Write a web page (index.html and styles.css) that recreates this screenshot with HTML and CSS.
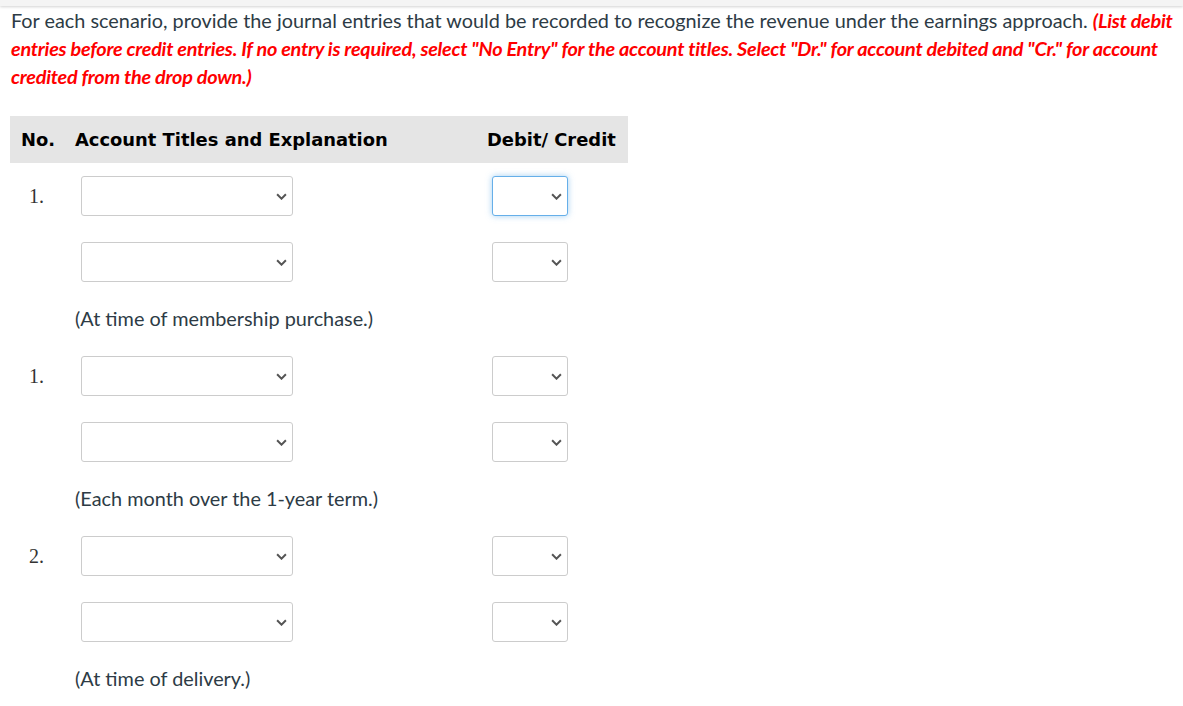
FILE: index.html
```html
<!DOCTYPE html>
<html lang="en">
<head>
  <meta charset="UTF-8">
  <title>Journal Entries</title>
  <link rel="stylesheet" href="styles.css">
</head>
<body>
  <div class="topbar"></div>

  <p class="prompt">
    For each scenario, provide the journal entries that would be recorded to recognize the revenue under the earnings approach.
    <em class="note">(List debit entries before credit entries. If no entry is required, select "No Entry" for the account titles. Select "Dr." for account debited and "Cr." for account credited from the drop down.)</em>
  </p>

  <div class="journal">
    <div class="head">
      <div class="cell">No.</div>
      <div class="cell">Account Titles and Explanation</div>
      <div class="cell">Debit/ Credit</div>
    </div>

    <!-- scenario 1 -->
    <div class="entry">
      <div class="num">1.</div>
      <div class="pick wide"><select class="box"><option></option></select><svg class="chev" viewBox="0 0 10 6"><path d="M1 1l4 4 4-4"/></svg></div>
      <div class="pick narrow"><select class="box focus"><option></option></select><svg class="chev" viewBox="0 0 10 6"><path d="M1 1l4 4 4-4"/></svg></div>
    </div>
    <div class="entry">
      <div class="num"></div>
      <div class="pick wide"><select class="box"><option></option></select><svg class="chev" viewBox="0 0 10 6"><path d="M1 1l4 4 4-4"/></svg></div>
      <div class="pick narrow"><select class="box"><option></option></select><svg class="chev" viewBox="0 0 10 6"><path d="M1 1l4 4 4-4"/></svg></div>
    </div>
    <div class="explain">(At time of membership purchase.)</div>

    <!-- scenario 1, monthly -->
    <div class="entry">
      <div class="num">1.</div>
      <div class="pick wide"><select class="box"><option></option></select><svg class="chev" viewBox="0 0 10 6"><path d="M1 1l4 4 4-4"/></svg></div>
      <div class="pick narrow"><select class="box"><option></option></select><svg class="chev" viewBox="0 0 10 6"><path d="M1 1l4 4 4-4"/></svg></div>
    </div>
    <div class="entry">
      <div class="num"></div>
      <div class="pick wide"><select class="box"><option></option></select><svg class="chev" viewBox="0 0 10 6"><path d="M1 1l4 4 4-4"/></svg></div>
      <div class="pick narrow"><select class="box"><option></option></select><svg class="chev" viewBox="0 0 10 6"><path d="M1 1l4 4 4-4"/></svg></div>
    </div>
    <div class="explain">(Each month over the 1-year term.)</div>

    <!-- scenario 2 -->
    <div class="entry">
      <div class="num">2.</div>
      <div class="pick wide"><select class="box"><option></option></select><svg class="chev" viewBox="0 0 10 6"><path d="M1 1l4 4 4-4"/></svg></div>
      <div class="pick narrow"><select class="box"><option></option></select><svg class="chev" viewBox="0 0 10 6"><path d="M1 1l4 4 4-4"/></svg></div>
    </div>
    <div class="entry">
      <div class="num"></div>
      <div class="pick wide"><select class="box"><option></option></select><svg class="chev" viewBox="0 0 10 6"><path d="M1 1l4 4 4-4"/></svg></div>
      <div class="pick narrow"><select class="box"><option></option></select><svg class="chev" viewBox="0 0 10 6"><path d="M1 1l4 4 4-4"/></svg></div>
    </div>
    <div class="explain">(At time of delivery.)</div>
  </div>
</body>
</html>
```

FILE: styles.css
```css
body {
  margin: 0;
  font-family: 'Lato', sans-serif;
  color: #2d3b45;
  background: #fff;
}
.topbar {
  height: 6px;
  background: #f4f4f4;
  box-shadow: 0 1px 3px rgba(0,0,0,0.18);
}
.prompt {
  margin: 0;
  padding: 0 6px 0 11px;
  font-size: 19.85px;
  line-height: 28px;
}
.note {
  color: #ff0000;
  font-weight: 700;
  letter-spacing: -0.25px;
}
.journal {
  margin: 26px 0 0 10px;
  width: 618px;
}
.head, .entry {
  display: grid;
  grid-template-columns: 65px 412px 141px;
}
.head {
  background: #e5e5e5;
  height: 47px;
  align-items: center;
  font-family: 'DejaVu Sans', sans-serif;
  font-weight: 700;
  font-size: 17.9px;
  color: #000;
}
.head .cell:first-child {
  padding-left: 11px;
}
.entry {
  height: 66px;
  padding-top: 13px;
  box-sizing: border-box;
}
.num {
  padding-left: 19px;
  font-family: 'Liberation Serif', serif;
  font-size: 20px;
  line-height: 40px;
  color: #333;
}
.pick {
  position: relative;
  height: 40px;
}
.wide {
  margin-left: 6px;
  width: 212px;
}
.narrow {
  margin-left: 5px;
  width: 76px;
}
.box {
  appearance: none;
  width: 100%;
  height: 40px;
  border: 1px solid #cccccc;
  border-radius: 3px;
  background: #fff;
  margin: 0;
}
.box.focus {
  border-color: #66afe9;
  box-shadow: 0 0 6px rgba(102,175,233,0.6);
}
.chev {
  position: absolute;
  right: 6px;
  top: 17px;
  width: 11px;
  height: 7px;
  fill: none;
  stroke: #555;
  stroke-width: 1.8;
  pointer-events: none;
}
.explain {
  height: 48px;
  padding: 11px 0 0 65px;
  box-sizing: border-box;
  font-size: 19.85px;
  line-height: 24px;
  color: #2d3b45;
}
```
